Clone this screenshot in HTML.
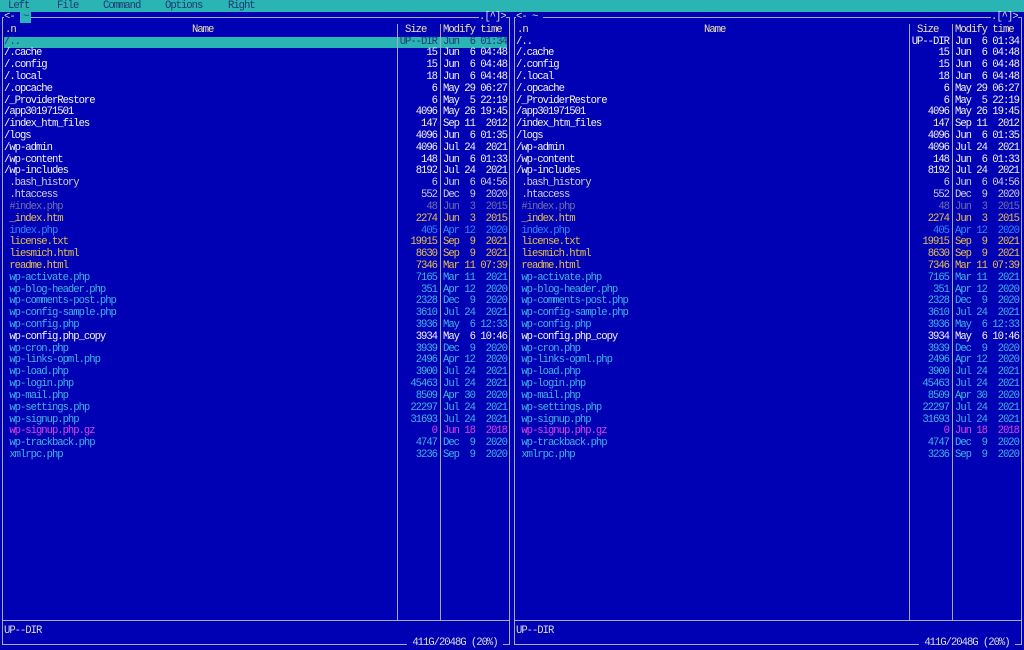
<!DOCTYPE html>
<html><head><meta charset="utf-8"><style>
*{margin:0;padding:0}
body{width:1024px;height:650px;background:#0000b4;overflow:hidden;position:relative;font-family:"Liberation Mono","DejaVu Sans Mono",monospace;font-size:10.6px;letter-spacing:-1.03px;color:#e8e8e8}
.a{position:absolute;white-space:pre;line-height:11.818px}
pre{position:absolute;font:inherit;line-height:11.818px;margin:0}
.menu{position:absolute;left:0;top:0;width:1024px;height:12px;background:#2ab4b4}
.menu span{position:absolute;top:0;line-height:12px;color:#1e3a78}
.hl{position:absolute;background:#a8a8cc}
.d{color:#f4f4f4}.g{color:#d0d0dc}.k{color:#7070a8}.y{color:#e6c050}.b{color:#2c8cf4}.c{color:#40b4e6}.w{color:#f4f4f4}.m{color:#e040e0}
.h{color:#ece4b4}
.sel{position:absolute;background:#2ab4b4;height:11.8px}
</style></head><body>
<div class="menu"><span style="left:8px">Left</span><span style="left:57px">File</span><span style="left:103px">Command</span><span style="left:165px">Options</span><span style="left:228px">Right</span></div>

<div class="sel" style="left:4px;top:36.5px;width:503px"></div>

<div class="hl" style="left:2px;top:17px;width:1px;height:627px"></div>
<div class="hl" style="left:509px;top:17px;width:1px;height:627px"></div>
<div class="hl" style="left:2px;top:17px;width:508px;height:1px"></div>
<div class="hl" style="left:2px;top:620px;width:508px;height:1px"></div>
<div class="hl" style="left:2px;top:644px;width:508px;height:1px"></div>
<div class="hl" style="left:397px;top:24px;width:1px;height:596px"></div>
<div class="hl" style="left:440px;top:24px;width:1px;height:596px"></div>
<div class="hl" style="left:514px;top:17px;width:1px;height:627px"></div>
<div class="hl" style="left:1021px;top:17px;width:1px;height:627px"></div>
<div class="hl" style="left:514px;top:17px;width:508px;height:1px"></div>
<div class="hl" style="left:514px;top:620px;width:508px;height:1px"></div>
<div class="hl" style="left:514px;top:644px;width:508px;height:1px"></div>
<div class="hl" style="left:909px;top:24px;width:1px;height:596px"></div>
<div class="hl" style="left:952px;top:24px;width:1px;height:596px"></div>

<div class="a" style="left:4px;top:12px;background:#0000b4;color:#ddd">&lt;- <span style="background:#2ab4b4;color:#1e3a78;padding:0 3px">~</span></div>
<div class="a" style="left:479px;top:12px;background:#0000b4;color:#ddd">.[^]&gt;</div>
<div class="a" style="left:516px;top:12px;background:#0000b4;color:#ddd">&lt;- ~ </div>
<div class="a" style="left:991px;top:12px;background:#0000b4;color:#ddd">.[^]&gt;</div>
<div class="a" style="left:407px;top:638px;background:#0000b4;color:#ddd"> 411G/2048G (20%) </div>
<div class="a" style="left:919px;top:638px;background:#0000b4;color:#ddd"> 411G/2048G (20%) </div>
<div class="a" style="left:4px;top:626px;color:#ddd">UP--DIR</div>
<div class="a" style="left:516px;top:626px;color:#ddd">UP--DIR</div>

<div class="a h" style="left:5px;top:25px">.n</div>
<div class="a h" style="left:192px;top:25px">Name</div>
<div class="a h" style="left:405px;top:25px">Size</div>
<div class="a h" style="left:443px;top:25px">Modify time</div>
<div class="a h" style="left:517px;top:25px">.n</div>
<div class="a h" style="left:704px;top:25px">Name</div>
<div class="a h" style="left:917px;top:25px">Size</div>
<div class="a h" style="left:955px;top:25px">Modify time</div>

<pre style="left:4px;top:36.5px"><span style="color:#1e3a78">/..</span>
<span class="d">/.cache</span>
<span class="d">/.config</span>
<span class="d">/.local</span>
<span class="d">/.opcache</span>
<span class="d">/_ProviderRestore</span>
<span class="d">/app301971501</span>
<span class="d">/index_htm_files</span>
<span class="d">/logs</span>
<span class="d">/wp-admin</span>
<span class="d">/wp-content</span>
<span class="d">/wp-includes</span>
<span class="g"> .bash_history</span>
<span class="g"> .htaccess</span>
<span class="k"> #index.php</span>
<span class="y"> _index.htm</span>
<span class="b"> index.php</span>
<span class="y"> license.txt</span>
<span class="y"> liesmich.html</span>
<span class="y"> readme.html</span>
<span class="c"> wp-activate.php</span>
<span class="c"> wp-blog-header.php</span>
<span class="c"> wp-comments-post.php</span>
<span class="c"> wp-config-sample.php</span>
<span class="c"> wp-config.php</span>
<span class="w"> wp-config.php_copy</span>
<span class="c"> wp-cron.php</span>
<span class="c"> wp-links-opml.php</span>
<span class="c"> wp-load.php</span>
<span class="c"> wp-login.php</span>
<span class="c"> wp-mail.php</span>
<span class="c"> wp-settings.php</span>
<span class="c"> wp-signup.php</span>
<span class="m"> wp-signup.php.gz</span>
<span class="c"> wp-trackback.php</span>
<span class="c"> xmlrpc.php</span></pre>
<pre style="left:395px;top:36.5px;width:42px;text-align:right"><span style="color:#1e3a78">UP--DIR</span>
<span class="d">15</span>
<span class="d">15</span>
<span class="d">18</span>
<span class="d">6</span>
<span class="d">6</span>
<span class="d">4096</span>
<span class="d">147</span>
<span class="d">4096</span>
<span class="d">4096</span>
<span class="d">148</span>
<span class="d">8192</span>
<span class="g">6</span>
<span class="g">552</span>
<span class="k">48</span>
<span class="y">2274</span>
<span class="b">405</span>
<span class="y">19915</span>
<span class="y">8630</span>
<span class="y">7346</span>
<span class="c">7165</span>
<span class="c">351</span>
<span class="c">2328</span>
<span class="c">3610</span>
<span class="c">3936</span>
<span class="w">3934</span>
<span class="c">3939</span>
<span class="c">2496</span>
<span class="c">3900</span>
<span class="c">45463</span>
<span class="c">8509</span>
<span class="c">22297</span>
<span class="c">31693</span>
<span class="m">0</span>
<span class="c">4747</span>
<span class="c">3236</span></pre>
<pre style="left:443px;top:36.5px"><span style="color:#1e3a78">Jun  6 01:34</span>
<span class="d">Jun  6 04:48</span>
<span class="d">Jun  6 04:48</span>
<span class="d">Jun  6 04:48</span>
<span class="d">May 29 06:27</span>
<span class="d">May  5 22:19</span>
<span class="d">May 26 19:45</span>
<span class="d">Sep 11  2012</span>
<span class="d">Jun  6 01:35</span>
<span class="d">Jul 24  2021</span>
<span class="d">Jun  6 01:33</span>
<span class="d">Jul 24  2021</span>
<span class="g">Jun  6 04:56</span>
<span class="g">Dec  9  2020</span>
<span class="k">Jun  3  2015</span>
<span class="y">Jun  3  2015</span>
<span class="b">Apr 12  2020</span>
<span class="y">Sep  9  2021</span>
<span class="y">Sep  9  2021</span>
<span class="y">Mar 11 07:39</span>
<span class="c">Mar 11  2021</span>
<span class="c">Apr 12  2020</span>
<span class="c">Dec  9  2020</span>
<span class="c">Jul 24  2021</span>
<span class="c">May  6 12:33</span>
<span class="w">May  6 10:46</span>
<span class="c">Dec  9  2020</span>
<span class="c">Apr 12  2020</span>
<span class="c">Jul 24  2021</span>
<span class="c">Jul 24  2021</span>
<span class="c">Apr 30  2020</span>
<span class="c">Jul 24  2021</span>
<span class="c">Jul 24  2021</span>
<span class="m">Jun 18  2018</span>
<span class="c">Dec  9  2020</span>
<span class="c">Sep  9  2020</span></pre>

<pre style="left:516px;top:36.5px"><span class="d">/..</span>
<span class="d">/.cache</span>
<span class="d">/.config</span>
<span class="d">/.local</span>
<span class="d">/.opcache</span>
<span class="d">/_ProviderRestore</span>
<span class="d">/app301971501</span>
<span class="d">/index_htm_files</span>
<span class="d">/logs</span>
<span class="d">/wp-admin</span>
<span class="d">/wp-content</span>
<span class="d">/wp-includes</span>
<span class="g"> .bash_history</span>
<span class="g"> .htaccess</span>
<span class="k"> #index.php</span>
<span class="y"> _index.htm</span>
<span class="b"> index.php</span>
<span class="y"> license.txt</span>
<span class="y"> liesmich.html</span>
<span class="y"> readme.html</span>
<span class="c"> wp-activate.php</span>
<span class="c"> wp-blog-header.php</span>
<span class="c"> wp-comments-post.php</span>
<span class="c"> wp-config-sample.php</span>
<span class="c"> wp-config.php</span>
<span class="w"> wp-config.php_copy</span>
<span class="c"> wp-cron.php</span>
<span class="c"> wp-links-opml.php</span>
<span class="c"> wp-load.php</span>
<span class="c"> wp-login.php</span>
<span class="c"> wp-mail.php</span>
<span class="c"> wp-settings.php</span>
<span class="c"> wp-signup.php</span>
<span class="m"> wp-signup.php.gz</span>
<span class="c"> wp-trackback.php</span>
<span class="c"> xmlrpc.php</span></pre>
<pre style="left:907px;top:36.5px;width:42px;text-align:right"><span class="d">UP--DIR</span>
<span class="d">15</span>
<span class="d">15</span>
<span class="d">18</span>
<span class="d">6</span>
<span class="d">6</span>
<span class="d">4096</span>
<span class="d">147</span>
<span class="d">4096</span>
<span class="d">4096</span>
<span class="d">148</span>
<span class="d">8192</span>
<span class="g">6</span>
<span class="g">552</span>
<span class="k">48</span>
<span class="y">2274</span>
<span class="b">405</span>
<span class="y">19915</span>
<span class="y">8630</span>
<span class="y">7346</span>
<span class="c">7165</span>
<span class="c">351</span>
<span class="c">2328</span>
<span class="c">3610</span>
<span class="c">3936</span>
<span class="w">3934</span>
<span class="c">3939</span>
<span class="c">2496</span>
<span class="c">3900</span>
<span class="c">45463</span>
<span class="c">8509</span>
<span class="c">22297</span>
<span class="c">31693</span>
<span class="m">0</span>
<span class="c">4747</span>
<span class="c">3236</span></pre>
<pre style="left:955px;top:36.5px"><span class="d">Jun  6 01:34</span>
<span class="d">Jun  6 04:48</span>
<span class="d">Jun  6 04:48</span>
<span class="d">Jun  6 04:48</span>
<span class="d">May 29 06:27</span>
<span class="d">May  5 22:19</span>
<span class="d">May 26 19:45</span>
<span class="d">Sep 11  2012</span>
<span class="d">Jun  6 01:35</span>
<span class="d">Jul 24  2021</span>
<span class="d">Jun  6 01:33</span>
<span class="d">Jul 24  2021</span>
<span class="g">Jun  6 04:56</span>
<span class="g">Dec  9  2020</span>
<span class="k">Jun  3  2015</span>
<span class="y">Jun  3  2015</span>
<span class="b">Apr 12  2020</span>
<span class="y">Sep  9  2021</span>
<span class="y">Sep  9  2021</span>
<span class="y">Mar 11 07:39</span>
<span class="c">Mar 11  2021</span>
<span class="c">Apr 12  2020</span>
<span class="c">Dec  9  2020</span>
<span class="c">Jul 24  2021</span>
<span class="c">May  6 12:33</span>
<span class="w">May  6 10:46</span>
<span class="c">Dec  9  2020</span>
<span class="c">Apr 12  2020</span>
<span class="c">Jul 24  2021</span>
<span class="c">Jul 24  2021</span>
<span class="c">Apr 30  2020</span>
<span class="c">Jul 24  2021</span>
<span class="c">Jul 24  2021</span>
<span class="m">Jun 18  2018</span>
<span class="c">Dec  9  2020</span>
<span class="c">Sep  9  2020</span></pre>
</body></html>
